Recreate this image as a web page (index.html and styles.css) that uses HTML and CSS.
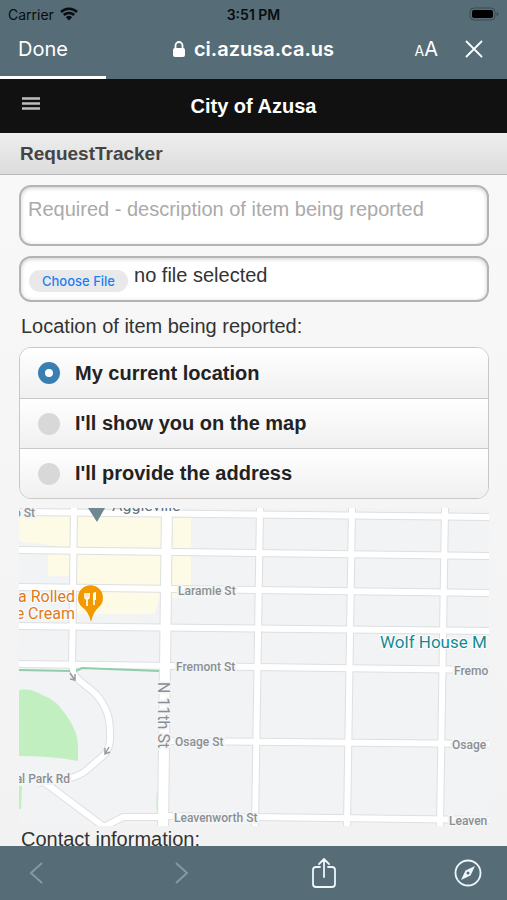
FILE: index.html
```
<!DOCTYPE html>
<html lang="en">
<head>
  <meta charset="UTF-8" />
  <meta name="viewport" content="width=device-width, initial-scale=1.0"/>
  <title>City of Azusa - RequestTracker</title>
  <link rel="stylesheet" href="styles.css">
</head>
<body>
  <header class="browser-top">
    <div class="status-bar">
      <div class="carrier">
        <span>Carrier</span>
        <svg width="18" height="14" viewBox="0 0 18 14" aria-hidden="true">
          <path d="M1 5a11.5 11.5 0 0 1 16 0M3.800 8a7.500 7.500 0 0 1 10.400 0" fill="none" stroke="#080d10" stroke-width="2.500"/>
          <path d="M9 13.500 5.900 10.200a4.500 4.500 0 0 1 6.200 0z" fill="#080d10"/>
        </svg>
      </div>
      <span class="time">3:51 PM</span>
      <svg class="battery" width="30" height="14" viewBox="0 0 30 14" aria-hidden="true">
        <rect x="1" y="1" width="25" height="12" rx="4" fill="none" stroke="#3b4c54"/>
        <rect x="3" y="3" width="21" height="8" rx="2" fill="#000"/>
        <path d="M27.500 5v4q2-.5 2-2t-2-2z" fill="#3b4c54"/>
      </svg>
    </div>
    <div class="address-bar">
      <button type="button" class="done">Done</button>
      <div class="address">
        <svg width="12" height="16" viewBox="0 0 12 16" aria-hidden="true">
          <rect y="7" width="12" height="9" rx="2" fill="#fff"/>
          <path d="M2.500 8V4.500a3.500 3.500 0 0 1 7 0V8" fill="none" stroke="#fff" stroke-width="1.800"/>
        </svg>
        <span>ci.azusa.ca.us</span>
      </div>
      <div class="tools">
        <button type="button" aria-label="Text size"><small>A</small>A</button>
        <button type="button" aria-label="Stop loading">
          <svg width="18" height="18" viewBox="0 0 18 18" aria-hidden="true">
            <path d="M1.500 1.500l15 15M16.500 1.500l-15 15" stroke="#fff" stroke-width="1.800" stroke-linecap="round"/>
          </svg>
        </button>
      </div>
    </div>
    <div class="progress"></div>
  </header>

  <main class="page">
    <div class="site-header">
      <button type="button" class="menu" aria-label="Menu">
        <svg width="20" height="13" viewBox="0 0 20 13" aria-hidden="true">
          <path d="M1 1.500h18M1 6.500h18M1 11.500h18" stroke="#bcc0bd" stroke-width="2.400"/>
        </svg>
      </button>
      <h1>City of Azusa</h1>
    </div>
    <h2>RequestTracker</h2>

    <form class="request-form">
      <textarea name="description" aria-label="Description" placeholder="Required - description of item being reported" required></textarea>

      <label class="file-field">
        <input type="file" name="photo" />
        <span class="choose">Choose File</span>
        <span class="file-name">no file selected</span>
      </label>

      <p class="caption" id="location-caption">Location of item being reported:</p>
      <div class="options" role="radiogroup" aria-labelledby="location-caption">
        <label><input type="radio" name="location" value="current" checked />My current location</label>
        <label><input type="radio" name="location" value="map" />I'll show you on the map</label>
        <label><input type="radio" name="location" value="address" />I'll provide the address</label>
      </div>

      <svg class="map" viewBox="19 508 470 318" role="img" aria-label="Map">
        <defs>
          <g id="streets">
            <path d="M19 512 489 517M19 550 489 556M19 587 489 593M19 626 489 631M19 664 489 670"/>
            <path d="M165 741 489 744M163 816 489 820"/>
            <path d="M74 508 72 668M260 508 255 826M352 508 347 826M445 508 440 826"/>
          </g>
          <path id="park-road" d="M72 664 74 674C80 684 92 688 99 698C107 709 110 718 110 733Q111 748 104 755L88 769Q81 776 63 780L38 783M40 779 104 827 123 817H165"/>
        </defs>
        <rect x="19" y="508" width="470" height="318" fill="#f1f3f4"/>

        <!-- business blocks -->
        <path d="M19 514H161V592L155 614H76V586H70V576H48V553H70V548L19 541zM170 518h21v80h-21z" fill="#fdfae6"/>
        <!-- park -->
        <path d="M19 690Q31 688 42 695Q56 700 63 711Q78 730 78 746V761Q52 756 19 756zM19 786h3l-1 23h-2z" fill="#c2efbf"/>

        <g fill="none" stroke="#dddfe1">
          <use href="#streets" stroke-width="8"/>
          <use href="#park-road" stroke-width="8"/>
          <path d="M167 508 163 826" stroke-width="12"/>
        </g>
        <g fill="none" stroke="#fff">
          <use href="#streets" stroke-width="6"/>
          <use href="#park-road" stroke-width="6"/>
          <path d="M167 508 163 826" stroke-width="10"/>
        </g>
        <path d="M19 670 70 671M76 671 82 668 159 671" fill="none" stroke="#91ceaa" stroke-width="2"/>
        <path d="M157 793v17" stroke="#c2efbf"/>
        <path d="M70 673l5 7m0-6v6l-5-1M109 747l-4 7m0-6v6l5-2" fill="none" stroke="#959ca4" stroke-width="1.500"/>

        <g class="street-names">
          <text x="35" y="517" text-anchor="end">o St</text>
          <text x="178" y="595">Laramie St</text>
          <text x="176" y="671">Fremont St</text>
          <text x="454" y="675">Fremo</text>
          <text x="175" y="746">Osage St</text>
          <text x="452" y="749">Osage</text>
          <text x="174" y="822">Leavenworth St</text>
          <text x="449" y="825">Leaven</text>
          <text x="70" y="783" text-anchor="end">al Park Rd</text>
          <text class="avenue" transform="translate(158 682) rotate(90)">N 11th St</text>
        </g>
        <g class="places">
          <text class="gray" x="112" y="511">Aggieville</text>
          <text class="orange" x="75" y="602" text-anchor="end">a Rolled</text>
          <text class="orange" x="75" y="619" text-anchor="end">e Cream</text>
          <text class="teal" x="380" y="648">Wolf House M</text>
        </g>
        <path d="M88 508h17l-8 14z" fill="#6f8790"/>
        <path d="M91 622Q89 612 82 607A12.500 12.500 0 1 1 99 607Q93 612 91 622z" fill="#f29900"/>
        <path d="M85 593v4q0 2 2 2t2-2v-4M87 593v13M94 605v-12" fill="none" stroke="#fff" stroke-width="1.600"/>
        <path d="M93 600v-5q0-3 3-3v8z" fill="#fff"/>
      </svg>

      <p class="caption">Contact information:</p>
    </form>
  </main>

  <nav class="browser-bottom">
    <button type="button" aria-label="Back" disabled>
      <svg width="26" height="30" viewBox="0 0 26 30"><path d="M18 5 7 15l11 10" fill="none" stroke="#839aa5" stroke-width="2"/></svg>
    </button>
    <button type="button" aria-label="Forward" disabled>
      <svg width="26" height="30" viewBox="0 0 26 30"><path d="M9 5l11 10L9 25" fill="none" stroke="#839aa5" stroke-width="2"/></svg>
    </button>
    <button type="button" aria-label="Share">
      <svg width="26" height="32" viewBox="0 0 26 32">
        <path d="M9 10H5q-3 0-3 3v14q0 3 3 3h16q3 0 3-3V13q0-3-3-3h-4M13 20V3M8 7l5-5 5 5" fill="none" stroke="#edf7fc" stroke-width="1.800" stroke-linecap="round"/>
      </svg>
    </button>
    <button type="button" aria-label="Open in browser">
      <svg width="28" height="28" viewBox="0 0 28 28">
        <circle cx="14" cy="14" r="12.500" fill="none" stroke="#edf7fc" stroke-width="1.800"/>
        <path d="M21 7 16.500 16.500 7 21l4.500-9.500z" fill="#edf7fc"/>
        <circle cx="14" cy="14" r="1.500" fill="#566c77"/>
      </svg>
    </button>
  </nav>
</body>
</html>
```
FILE: styles.css
```
* {
  box-sizing: border-box;
  margin: 0;
  padding: 0;
}

body {
  display: flex;
  flex-direction: column;
  height: 100vh;
  font-family: "Liberation Sans", Helvetica, Arial, sans-serif;
  color: #333;
  background: #f5f5f5;
}

button {
  border: none;
  background: none;
  color: inherit;
  font: inherit;
  cursor: pointer;
}

svg {
  display: block;
}

.browser-top {
  background: #566c77;
  color: #fff;
  font-family: Inter, sans-serif;
}

.status-bar,
.address-bar {
  display: grid;
  grid-template-columns: 1fr auto 1fr;
  align-items: center;
}

.status-bar {
  height: 28px;
  padding: 0 8px;
  font-size: 14px;
  color: #080d10;
}

.carrier {
  display: flex;
  align-items: center;
  gap: 6px;
}

.time {
  font-weight: 600;
}

.battery {
  justify-self: end;
}

.address-bar {
  height: 48px;
  padding: 0 24px 6px;
  font-size: 20px;
}

.done {
  justify-self: start;
  margin-left: -6px;
}

.address {
  display: flex;
  align-items: center;
  gap: 9px;
  font-weight: 600;
}

.tools {
  display: flex;
  align-items: center;
  justify-content: flex-end;
  gap: 27px;
}

.tools small {
  font-size: 14px;
}

.progress {
  width: 21%;
  height: 3px;
  background: #fff;
}

.page {
  flex: 1;
  min-height: 0;
  overflow-y: auto;
  scrollbar-width: none;
  background: linear-gradient(#f9f9f9, #f2f2f2);
}

.site-header {
  display: grid;
  grid-template-columns: 1fr auto 1fr;
  align-items: center;
  height: 54px;
  padding: 0 21px;
  background: #111;
  color: #fff;
}

.menu {
  justify-self: start;
  padding-bottom: 6px;
}

h1 {
  font-size: 20px;
}

h2 {
  padding: 0 20px;
  font-size: 19px;
  line-height: 41px;
  color: #444;
  background: linear-gradient(#eee, #dcdcdc);
  border-bottom: 1px solid #b8b8b8;
}

.request-form {
  display: flex;
  flex-direction: column;
  gap: 10px;
  padding: 10px 18px 20px 19px;
}

textarea,
.file-field {
  width: 100%;
  background: #fff;
  border: 2px solid #b4b4b4;
  border-radius: 12px;
  box-shadow: inset 0 1px 4px rgba(0, 0, 0, 0.2);
}

textarea {
  display: block;
  height: 61px;
  padding: 10px 7px;
  font: 20px/24px "Liberation Sans", Helvetica, Arial, sans-serif;
  color: #333;
  resize: none;
}

textarea::placeholder {
  color: #aaa;
}

.file-field {
  position: relative;
  display: flex;
  align-items: flex-end;
  gap: 6px;
  height: 46px;
  padding: 0 8px 8px;
}

.file-field input {
  position: absolute;
  inset: 0;
  width: 100%;
  opacity: 0;
}

.choose {
  padding: 0 13px;
  border-radius: 11px;
  background: #e9e9ea;
  color: #1a80f5;
  font: 500 13px/22px Inter, sans-serif;
}

.file-name {
  align-self: center;
  font-size: 20px;
}

.caption {
  padding: 0 2px;
  font-size: 20px;
  line-height: 26px;
}

.caption:first-of-type {
  margin-top: 1px;
  margin-bottom: -2px;
}

.options {
  overflow: hidden;
  margin-bottom: -1px;
  border: 1px solid #c8c8c8;
  border-radius: 12px;
}

.options label {
  display: flex;
  align-items: center;
  gap: 15px;
  height: 50px;
  padding: 0 18px;
  font-size: 20px;
  font-weight: bold;
  color: #222;
  background: linear-gradient(#fff, #f0f0f0);
}

.options label + label {
  border-top: 1px solid #c8c8c8;
}

.options input {
  appearance: none;
  width: 22px;
  height: 22px;
  border-radius: 50%;
  background: #d8d8d8;
}

.options input:checked {
  border: 7px solid #3a7fb2;
  background: #fff;
}

.map {
  width: 100%;
  height: auto;
  margin-bottom: -10px;
  font-family: Roboto, sans-serif;
}

.street-names {
  font-size: 12px;
  font-weight: 500;
  fill: #8b8f93;
  stroke: #f4f5f6;
  stroke-width: 4px;
  stroke-linejoin: round;
  paint-order: stroke;
}

.street-names .avenue {
  font-size: 16px;
  font-weight: 400;
}

.places {
  font-size: 16px;
  stroke: #fff;
  stroke-width: 2px;
  paint-order: stroke;
}

.gray {
  fill: #62727a;
}

.orange {
  fill: #dd7a20;
}

.teal {
  font-size: 17px;
  fill: #148a93;
}

.browser-bottom {
  display: flex;
  align-items: center;
  justify-content: space-between;
  height: 54px;
  padding: 0 25px 0 24px;
  background: #566c77;
}
```
